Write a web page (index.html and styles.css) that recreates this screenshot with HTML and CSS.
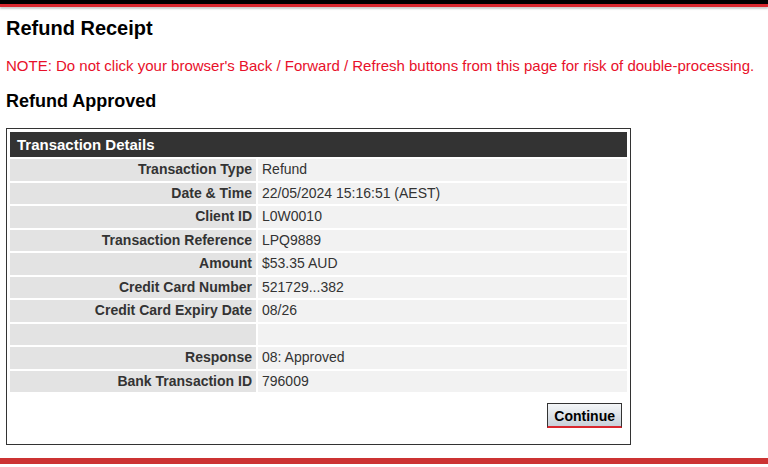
FILE: index.html
```html
<html>
<head>
  <link rel="stylesheet" href="styles.css">
</head>
<body>
  <div class="topbar"></div>

  <div class="page">
    <h1>Refund Receipt</h1>
    <p class="note">NOTE: Do not click your browser's Back / Forward / Refresh buttons from this page for risk of double-processing.</p>
    <h2>Refund Approved</h2>

    <div class="box">
      <table class="details">
        <tr><th colspan="2" class="head">Transaction Details</th></tr>
        <tr><td class="label">Transaction Type</td><td class="value">Refund</td></tr>
        <tr><td class="label">Date &amp; Time</td><td class="value">22/05/2024 15:16:51 (AEST)</td></tr>
        <tr><td class="label">Client ID</td><td class="value">L0W0010</td></tr>
        <tr><td class="label">Transaction Reference</td><td class="value">LPQ9889</td></tr>
        <tr><td class="label">Amount</td><td class="value">$53.35 AUD</td></tr>
        <tr><td class="label">Credit Card Number</td><td class="value">521729...382</td></tr>
        <tr><td class="label">Credit Card Expiry Date</td><td class="value">08/26</td></tr>
        <tr><td class="label">&nbsp;</td><td class="value">&nbsp;</td></tr>
        <tr><td class="label">Response</td><td class="value">08: Approved</td></tr>
        <tr><td class="label">Bank Transaction ID</td><td class="value">796009</td></tr>
      </table>
      <div class="actions">
        <button class="continue">Continue</button>
      </div>
    </div>
  </div>

  <div class="bottombar"></div>
</body>
</html>
```

FILE: styles.css
```css
body {
	margin: 0;
	font-family: Arial, "Liberation Sans", sans-serif;
	color: #000;
	background: #fff;
}

.topbar {
	height: 4px;
	background: #000;
	border-bottom: 3px solid #d9272e;
	box-shadow: 0 2px 2px #ccc;
}

.page {
	padding: 0 6px;
}

h1 {
	font-size: 20px;
	margin: 9px 0 0;
	line-height: 24px;
}

.note {
	color: #e8102a;
	font-size: 15px;
	margin: 17px 0 0;
	line-height: 18px;
}

h2 {
	font-size: 18px;
	margin: 15px 0 0;
	line-height: 22px;
}

.box {
	margin-top: 16px;
	width: 617px;
	border: 1px solid #333;
	padding: 3px 3px 16px;
}

.details {
	width: 100%;
	border-collapse: separate;
	border-spacing: 0 2px;
	margin-top: -2px;
	font-size: 14px;
	color: #333;
}

.head {
	background: #333;
	color: #fff;
	text-align: left;
	font-size: 15px;
	padding: 4px 7px;
	height: 18px;
}

.details td {
	padding: 3px 4px;
	line-height: 15.5px;
}

.label {
	width: 238px;
	background: #e3e3e3;
	text-align: right;
	font-weight: bold;
	border-right: 2px solid #fff;
}

.value {
	background: #f2f2f2;
}

.actions {
	display: flex;
	justify-content: flex-end;
	padding: 9px 5px 0 0;
}

.continue {
	font-family: Arial, "Liberation Sans", sans-serif;
	font-size: 14px;
	font-weight: bold;
	color: #000;
	padding: 3px 6px 2px;
	height: 25px;
	background: linear-gradient(#f4f6f8, #c9d1da);
	border: 1px solid #333;
	border-bottom: 2px solid #d9272e;
}

.bottombar {
	margin-top: 13px;
	height: 6px;
	background: #cc3333;
}
```
